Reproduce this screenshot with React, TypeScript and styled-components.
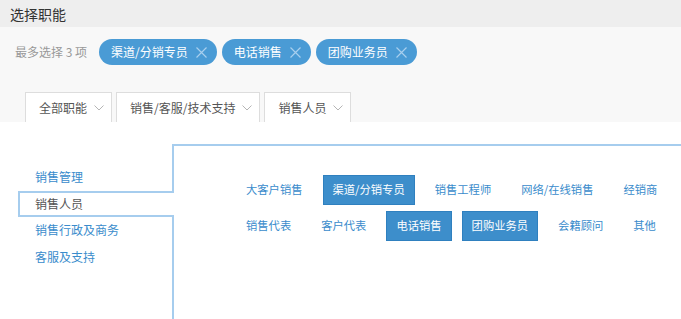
import styled, { createGlobalStyle } from 'styled-components';

const GlobalStyle = createGlobalStyle`
  html, body {
    margin: 0;
    padding: 0;
    background: #ffffff;
    font-family: "Noto Sans CJK SC", "Liberation Sans", sans-serif;
  }
`;

const selectedTags = ['渠道/分销专员', '电话销售', '团购业务员'];
const tabs = ['全部职能', '销售/客服/技术支持', '销售人员'];
const menu = ['销售管理', '销售人员', '销售行政及商务', '客服及支持'];
const jobRows = [
  ['大客户销售', '渠道/分销专员', '销售工程师', '网络/在线销售', '经销商'],
  ['销售代表', '客户代表', '电话销售', '团购业务员', '会籍顾问', '其他']
];

export default function App(): JSX.Element {
  return (
    <>
      <GlobalStyle />
      <Page>
        <Header>选择职能</Header>
        <TopArea>
          <TagRow>
            <Hint>最多选择 3 项</Hint>
            {selectedTags.map((t) => (
              <Tag key={t}>
                {t}
                <CloseIcon />
              </Tag>
            ))}
          </TagRow>
          <TabBar>
            {tabs.map((t) => (
              <Tab key={t}>
                {t}
                <Chevron />
              </Tab>
            ))}
          </TabBar>
        </TopArea>
        <Body>
          <Menu>
            {menu.map((m) => (
              <MenuItem key={m} $active={m === '销售人员'}>
                {m}
              </MenuItem>
            ))}
          </Menu>
          <Panel>
            {jobRows.map((row, i) => (
              <JobRow key={i}>
                {row.map((j) => (
                  <Job key={j} $selected={selectedTags.includes(j)}>
                    {j}
                  </Job>
                ))}
              </JobRow>
            ))}
          </Panel>
        </Body>
      </Page>
    </>
  );
}

function CloseIcon() {
  return (
    <svg width="11" height="11" viewBox="0 0 11 11" style={{ flexShrink: 0 }}>
      <path d="M0.5 0.5 L10.5 10.5 M10.5 0.5 L0.5 10.5" stroke="#a8cfee" strokeWidth="1.2" fill="none" />
    </svg>
  );
}

function Chevron() {
  return (
    <svg width="10" height="6" viewBox="0 0 10 6" style={{ flexShrink: 0 }}>
      <polyline points="0.5,0.5 5,5 9.5,0.5" stroke="#b5b5b5" strokeWidth="1" fill="none" />
    </svg>
  );
}

const Page = styled.div`
  width: 681px;
  height: 319px;
  overflow: hidden;
  display: flex;
  flex-direction: column;
`;

const Header = styled.div`
  height: 27px;
  background: #eeeeee;
  padding-left: 10px;
  display: flex;
  align-items: center;
  font-size: 14px;
  color: #333333;
  line-height: 1;
`;

const TopArea = styled.div`
  background: #f8f8f8;
  display: flex;
  flex-direction: column;
`;

const TagRow = styled.div`
  height: 65px;
  padding: 12px 0 0 15px;
  box-sizing: border-box;
  display: flex;
  align-items: flex-start;
  gap: 5px;
`;

const Hint = styled.span`
  font-size: 12px;
  color: #999999;
  line-height: 26px;
  margin-right: 7px;
`;

const Tag = styled.span`
  height: 26px;
  border-radius: 13px;
  background: #4a9bd5;
  color: #ffffff;
  font-size: 12px;
  line-height: 1;
  display: inline-flex;
  align-items: center;
  gap: 8px;
  padding: 0 10px 0 12px;
`;

const TabBar = styled.div`
  height: 30px;
  padding-left: 25px;
  display: flex;
  gap: 4px;
  align-items: stretch;
`;

const Tab = styled.div`
  background: #ffffff;
  border: 1px solid #dddddd;
  border-bottom: none;
  padding: 0 7px 0 13px;
  display: flex;
  align-items: center;
  gap: 7px;
  font-size: 12px;
  color: #555555;
  line-height: 1;
`;

const Body = styled.div`
  flex: 1;
  display: flex;
  padding-top: 22px;
`;

const Menu = styled.div`
  width: 172px;
  flex-shrink: 0;
  padding: 20px 0 0 18px;
  box-sizing: border-box;
  display: flex;
  flex-direction: column;
`;

const MenuItem = styled.div<{ $active?: boolean }>`
  height: 26.5px;
  display: flex;
  align-items: center;
  font-size: 12px;
  line-height: 1;
  padding-left: 15px;
  box-sizing: border-box;
  color: ${(p) => (p.$active ? '#555555' : '#3a8ccc')};
  border: 2px solid ${(p) => (p.$active ? '#a6cdee' : 'transparent')};
  border-right: none;
  background: ${(p) => (p.$active ? '#ffffff' : 'transparent')};
  margin-right: ${(p) => (p.$active ? '-2px' : '0')};
  position: relative;
  z-index: 1;
`;

const Panel = styled.div`
  flex: 1;
  border-top: 2px solid #a6cdee;
  border-left: 2px solid #a6cdee;
  padding: 29px 0 0 62px;
  display: flex;
  flex-direction: column;
  gap: 6px;
`;

const JobRow = styled.div`
  display: flex;
  gap: 10px;
`;

const Job = styled.div<{ $selected?: boolean }>`
  height: 30px;
  box-sizing: border-box;
  padding: 0 9px;
  display: flex;
  align-items: center;
  font-size: 11.3px;
  line-height: 1;
  white-space: nowrap;
  color: ${(p) => (p.$selected ? '#ffffff' : '#3a8ccc')};
  background: ${(p) => (p.$selected ? '#3d8ecb' : 'transparent')};
  border: 1px solid ${(p) => (p.$selected ? '#2f80bf' : 'transparent')};
`;
